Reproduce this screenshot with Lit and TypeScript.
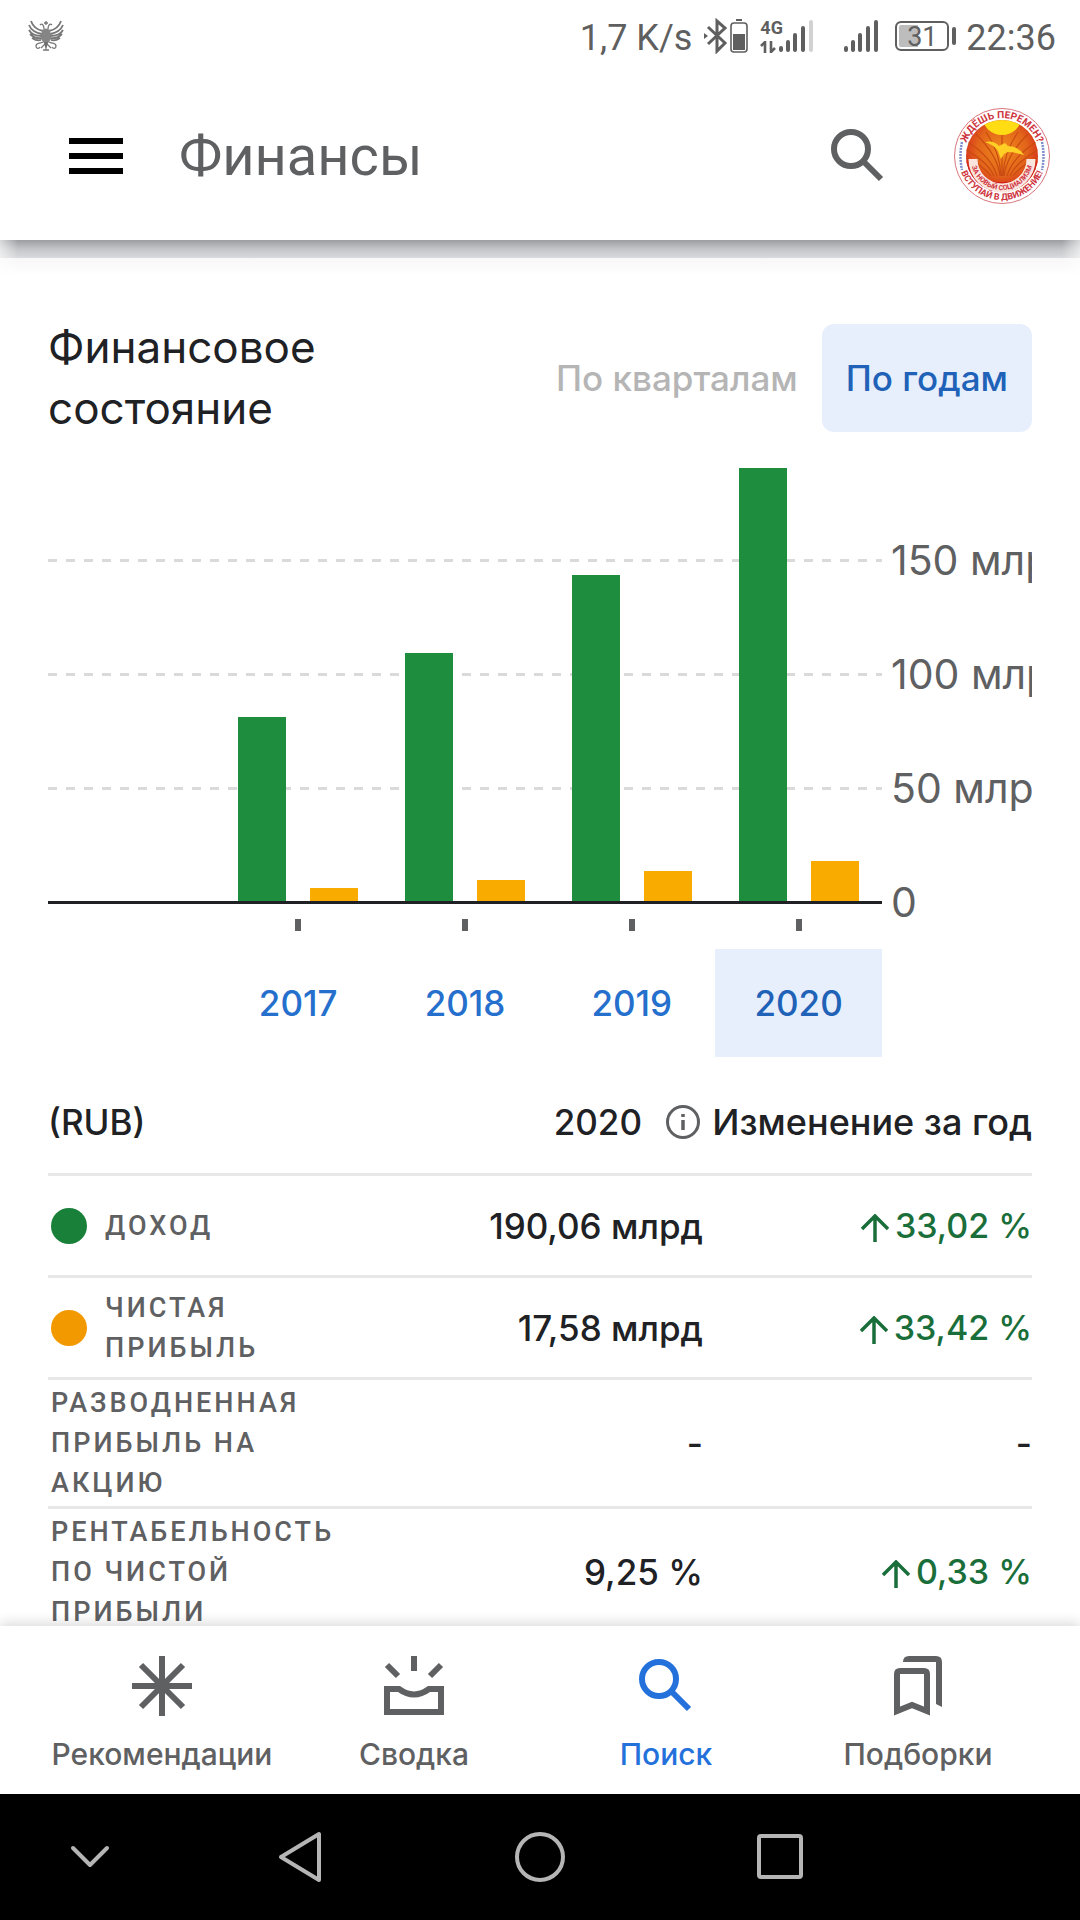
import { LitElement, html, css, svg, nothing } from "lit";
import { customElement, property, state } from "lit/decorators.js";
import { classMap } from "lit/directives/class-map.js";

interface YearData {
    year: string;
    income: number;
    profit: number;
}

interface Row {
    label: string;
    dot?: string;
    value: string;
    change: string;
}

const AXIS_MAX = 200;

const YEARS: YearData[] = [
    { year: "2017", income: 80.6, profit: 5.6 },
    { year: "2018", income: 108.8, profit: 9.2 },
    { year: "2019", income: 142.9, profit: 13.2 },
    { year: "2020", income: 190.06, profit: 17.58 },
];

const ROWS: Row[] = [
    { label: "Доход", dot: "income", value: "190,06 млрд", change: "33,02 %" },
    { label: "Чистая прибыль", dot: "profit", value: "17,58 млрд", change: "33,42 %" },
    { label: "Разводненная прибыль на акцию", value: "-", change: "-" },
    { label: "Рентабельность по чистой прибыли", value: "9,25 %", change: "0,33 %" },
];

const searchIcon = svg`
    <circle cx="20" cy="20" r="17" fill="none" stroke="currentColor" stroke-width="6" />
    <path d="M31 31L50 50" stroke="currentColor" stroke-width="6" />
`;

@customElement("status-bar")
export class StatusBar extends LitElement {
    render() {
        return html`
            <svg class="eagle" width="36" height="32" viewBox="0 0 36 32" aria-hidden="true">
                <g fill="none" stroke="#777" stroke-width="1.8">
                    <path d="M15 11C10 10 5 7 3 1M14 14C8 13 3 10 1 5M14 16C8 16 3 14 1 10M14 18C9 19 5 17 2 14M13 20C10 21 7 20 4 18" />
                    <path d="M21 11C26 10 31 7 33 1M22 14C28 13 33 10 35 5M22 16C28 16 33 14 35 10M22 18C27 19 31 17 34 14M23 20C26 21 29 20 32 18" />
                </g>
                <g fill="none" stroke="#777" stroke-width="1.3">
                    <path d="M16 9C16 5 14 3 12 5M20 9C20 5 22 3 24 5M18 1V5M16 3H20" />
                    <path d="M15 22C12 24 8 22 8 26C8 29 11 29 12 27M21 22C24 24 28 22 28 26C28 29 25 29 24 27" />
                    <path d="M17 24L13 28M19 24L23 28M15 30H21" />
                </g>
                <path d="M14 10Q18 7 22 10L23 19L18 26L13 19Z" fill="#858585" />
                <path d="M16 22L18 31L20 22Z" fill="#6f6f6f" />
            </svg>
            <span class="speed">1,7 K/s</span>
            <svg class="bluetooth" width="24" height="36" viewBox="0 0 24 36" aria-hidden="true">
                <path d="M4 9L21 25L13 33V3L21 10L4 26" fill="none" stroke="currentColor" stroke-width="3" />
                <path d="M0 15L4 18L0 21Z" fill="currentColor" />
            </svg>
            <svg class="device" width="18" height="36" viewBox="0 0 18 36" aria-hidden="true">
                <path d="M6 2H12" stroke="currentColor" stroke-width="2" />
                <rect x="1" y="5" width="16" height="29" rx="3" fill="none" stroke="currentColor" stroke-width="1.6" />
                <rect x="3" y="16" width="12" height="16" fill="currentColor" />
            </svg>
            <div class="network">
                <span>4G</span>
                <svg width="16" height="12" viewBox="0 0 16 12" aria-hidden="true">
                    <path d="M5 12V1L1 5M11 0V11L15 7" fill="none" stroke="currentColor" stroke-width="2.6" />
                </svg>
            </div>
            <svg class="signal" width="36" height="36" viewBox="0 0 36 36" aria-hidden="true">
                <g stroke="currentColor" stroke-width="4" stroke-linecap="round">
                    <path d="M3 32V30M10 32V24M17 32V17M25 32V10" />
                    <path d="M33 32V4" opacity="0.28" />
                </g>
            </svg>
            <svg class="signal second" width="36" height="36" viewBox="0 0 36 36" aria-hidden="true">
                <path
                    d="M3 32V30M10 32V24M17 32V17M25 32V10M33 32V4"
                    stroke="currentColor"
                    stroke-width="4"
                    stroke-linecap="round"
                />
            </svg>
            <div class="battery"><span>31</span></div>
            <div class="nub"></div>
            <span class="time">22:36</span>
        `;
    }

    static styles = css`
        :host {
            display: flex;
            flex: none;
            align-items: center;
            height: 72px;
            padding: 0 24px 0 28px;
            background: #fff;
            color: #5f5f5f;
            font-family: Roboto, sans-serif;
            font-size: 36px;
            line-height: 40px;
        }

        .speed {
            margin: 3px 12px 0 auto;
        }

        .device {
            margin: 0 12px 0 2px;
        }

        .network {
            display: flex;
            flex-direction: column;
            gap: 4px;
            font-size: 18px;
            font-weight: 700;
            line-height: 18px;
            width: 18px;
        }

        .second {
            margin: 0 16px 0 29px;
        }

        .battery {
            box-sizing: border-box;
            width: 54px;
            height: 30px;
            border: 2px solid #5f5f5f;
            border-radius: 6px;
            background: linear-gradient(90deg, #bdbdbd 42%, #fff 42%);
            box-shadow: inset 0 0 0 2px #fff;
            font-size: 27px;
            line-height: 28px;
            text-align: center;
        }

        .nub {
            width: 4px;
            height: 18px;
            margin: 0 10px 0 3px;
            border-radius: 2px;
            background: #5f5f5f;
        }

        .time {
            margin-top: 3px;
        }
    `;
}

@customElement("profile-badge")
export class ProfileBadge extends LitElement {
    render() {
        return html`
            <svg width="96" height="96" viewBox="0 0 96 96" aria-hidden="true">
                <defs>
                    <radialGradient id="field" cx="50%" cy="42%" r="58%">
                        <stop offset="0" stop-color="#f08a1c" />
                        <stop offset="0.6" stop-color="#e2641a" />
                        <stop offset="1" stop-color="#d3261c" />
                    </radialGradient>
                    <clipPath id="disc"><circle cx="48" cy="48" r="36" /></clipPath>
                    <path id="top" d="M10 48A38 38 0 0 1 86 48" />
                    <path id="bottom" d="M4 48A44 44 0 0 0 92 48" />
                    <path id="ribbon" d="M17 51A31 31 0 0 0 79 51" />
                </defs>
                <circle cx="48" cy="48" r="47.500" fill="#fff" stroke="#d9747c" stroke-width="1" />
                <circle cx="48" cy="48" r="36" fill="url(#field)" />
                <g clip-path="url(#disc)">
                    <g fill="none" stroke="#c94b12" stroke-width="1.200">
                        <path d="M46 68Q44 48 22 26M43 68Q38 50 14 34M40 68Q34 54 12 42M37 68Q30 58 12 50" />
                        <path d="M50 68Q52 48 74 26M53 68Q58 50 82 34M56 68Q62 54 84 42M59 68Q66 58 84 50" />
                        <path d="M47 68Q46 44 32 24M49 68Q50 44 64 24M48 68V26" />
                    </g>
                    <circle cx="48" cy="7" r="20" fill="#ffdc14" />
                    <path d="M12 50Q18 74 48 74Q78 74 84 50V90H12Z" fill="#d2241c" />
                </g>
                <path
                    d="M31 34Q40 32 45 38L51 35L54 38Q64 38 70 47Q60 44 54 44L50 46L47 51L44 43Q40 37 31 34Z"
                    fill="#ffcf26"
                />
                <path d="M19 51A29 29 0 0 0 77 51" fill="none" stroke="#fbe6df" stroke-width="9" />
                <g font-family="Roboto, sans-serif" font-weight="700" fill="#cf3540" text-anchor="middle">
                    <text font-size="10"><textPath href="#top" startOffset="50%">ЖДЁШЬ ПЕРЕМЕН?</textPath></text>
                    <text font-size="9"><textPath href="#bottom" startOffset="50%">ВСТУПАЙ В ДВИЖЕНИЕ!</textPath></text>
                    <text font-size="7"><textPath href="#ribbon" startOffset="50%">ЗА НОВЫЙ СОЦИАЛИЗМ</textPath></text>
                </g>
                <g fill="none" stroke="#7f8fce" stroke-width="2.500" stroke-dasharray="2 1">
                    <path d="M8 34Q5 48 8 62M88 34Q91 48 88 62" />
                </g>
            </svg>
        `;
    }

    static styles = css`
        :host {
            display: block;
            height: 96px;
        }
    `;
}

@customElement("finance-chart")
export class FinanceChart extends LitElement {
    @property({ type: String }) selected = "2020";

    private pick(year: string) {
        this.dispatchEvent(new CustomEvent("pick", { detail: year }));
    }

    private bar(kind: string, value: number) {
        return html`<div class="bar ${kind}" style="height: ${(value / AXIS_MAX) * 100}%"></div>`;
    }

    render() {
        return html`
            <div class="plot">
                <div class="lines"><i></i><i class="line"></i><i class="line"></i><i class="line"></i></div>
                <div class="groups">
                    <div></div>
                    ${YEARS.map(
                        (y) => html`<div class="group">${this.bar("income", y.income)}${this.bar("profit", y.profit)}</div>`
                    )}
                </div>
            </div>
            <div class="axis">
                <span>150 млрд</span>
                <span>100 млрд</span>
                <span>50 млрд</span>
                <span>0</span>
            </div>
            <div class="years">
                <div></div>
                ${YEARS.map(
                    (y) => html`<div class="year">
                        <i class="tick"></i>
                        <button
                            class=${classMap({ active: y.year === this.selected })}
                            @click=${() => this.pick(y.year)}
                        >
                            ${y.year}
                        </button>
                    </div>`
                )}
            </div>
        `;
    }

    static styles = css`
        :host {
            display: grid;
            grid-template-columns: 1fr 150px;
            margin-top: 6px;
        }

        .plot {
            display: grid;
            height: 456px;
            border-bottom: 3px solid #202124;
        }

        .lines,
        .groups {
            grid-area: 1 / 1;
        }

        .lines {
            display: grid;
            grid-template-rows: repeat(4, 1fr);
        }

        .line {
            height: 3px;
            background: repeating-linear-gradient(90deg, #dadada 0 9px, transparent 9px 18px);
        }

        .groups,
        .years {
            display: grid;
            grid-template-columns: repeat(5, 1fr);
        }

        .group {
            display: flex;
            align-items: flex-end;
            justify-content: center;
            gap: 24px;
        }

        .bar {
            width: 48px;
        }

        .income {
            background: #1e8e3e;
        }

        .profit {
            background: #f9ab00;
        }

        .axis {
            grid-area: 1 / 2 / 3 / 3;
            padding: 58px 0 0 9px;
            overflow: hidden;
            color: #5f6062;
            font-size: 41px;
            line-height: 114px;
            white-space: nowrap;
        }

        .axis span {
            display: block;
        }

        .year {
            display: flex;
            flex-direction: column;
            align-items: center;
            gap: 18px;
            padding-top: 15px;
        }

        .tick {
            width: 6px;
            height: 12px;
            background: #5f6062;
        }

        button {
            width: 100%;
            height: 108px;
            padding: 0;
            border: 0;
            background: none;
            color: #256fcd;
            font: inherit;
            font-size: 35px;
            font-weight: 500;
        }

        button.active {
            background: #e8effc;
            color: #2062b8;
        }
    `;
}

@customElement("finance-table")
export class FinanceTable extends LitElement {
    @property({ type: String }) year = "2020";

    private change(value: string) {
        if (value === "-") return html`<td>-</td>`;
        return html`<td class="up"><svg width="28" height="28" viewBox="0 0 28 28" aria-hidden="true">
                <path d="M14 28V3M1 15L14 2L27 15" fill="none" stroke="currentColor" stroke-width="3.500" /></svg
            >${value}</td>`;
    }

    render() {
        return html`
            <table>
                <thead>
                    <tr>
                        <th class="name" scope="col">(RUB)</th>
                        <th scope="col">
                            <div class="info">
                                ${this.year}
                                <svg width="34" height="34" viewBox="0 0 34 34" aria-hidden="true">
                                    <circle cx="17" cy="17" r="15.500" fill="none" stroke="#5f6062" stroke-width="3" />
                                    <path d="M17 9V12M17 15V25" stroke="#5f6062" stroke-width="3.500" />
                                </svg>
                            </div>
                        </th>
                        <th class="change" scope="col">Изменение за год</th>
                    </tr>
                </thead>
                <tbody>
                    ${ROWS.map(
                        (row) => html`<tr>
                            <th class="name" scope="row">
                                <div class="label">
                                    ${row.dot ? html`<i class="dot ${row.dot}"></i>` : nothing}
                                    <span>${row.label}</span>
                                </div>
                            </th>
                            <td>${row.value}</td>
                            ${this.change(row.change)}
                        </tr>`
                    )}
                </tbody>
            </table>
        `;
    }

    static styles = css`
        :host {
            display: block;
            margin-top: 14px;
        }

        table {
            width: 100%;
            border-collapse: separate;
            border-spacing: 0;
            table-layout: fixed;
            color: #202124;
            font-size: 35px;
            line-height: 40px;
        }

        tr {
            height: 102px;
        }

        th,
        td {
            padding: 0;
            font-weight: 500;
            text-align: right;
            white-space: nowrap;
        }

        .name {
            width: 31%;
            text-align: left;
        }

        .change {
            width: 329px;
            font-size: 36px;
        }

        .info {
            display: flex;
            align-items: center;
            justify-content: flex-end;
            gap: 24px;
            padding-right: 3px;
        }

        tbody th,
        tbody td {
            padding: 3px 0;
            border-top: 3px solid #e8e8e8;
        }

        .label {
            display: flex;
            align-items: center;
            gap: 18px;
            padding-left: 3px;
            color: #5f6062;
            font-family: Roboto, sans-serif;
            font-size: 27px;
            letter-spacing: 3px;
            text-transform: uppercase;
            white-space: normal;
        }

        .dot {
            flex: none;
            width: 36px;
            height: 36px;
            border-radius: 50%;
        }

        .income {
            background: #188038;
        }

        .profit {
            background: #f29900;
        }

        .up {
            color: #1a6e3a;
            font-size: 34px;
        }

        .up svg {
            margin-right: 6px;
            vertical-align: -4px;
        }
    `;
}

@customElement("bottom-nav")
export class BottomNav extends LitElement {
    @state() private current = "Поиск";

    private items = [
        {
            name: "Рекомендации",
            icon: svg`<path d="M30 0V60M0 30H60M9 9L51 51M51 9L9 51" fill="none" stroke="currentColor" stroke-width="6" />`,
        },
        {
            name: "Сводка",
            icon: svg`
                <path d="M30 0V15M3 9L14 20M57 9L46 20" stroke="currentColor" stroke-width="6" />
                <path d="M3 33H15Q30 44 45 33H57V56H3Z" fill="none" stroke="currentColor" stroke-width="6" />
            `,
        },
        {
            name: "Поиск",
            icon: svg`<g transform="translate(3 3)">${searchIcon}</g>`,
        },
        {
            name: "Подборки",
            icon: svg`
                <path d="M9 55V18Q9 15 12 15H36Q39 15 39 18V55L24 49Z" fill="none" stroke="currentColor" stroke-width="6" />
                <path d="M15 6Q15 0 21 0H48Q54 0 54 6V51L48 48V6Z" fill="currentColor" />
            `,
        },
    ];

    render() {
        return this.items.map(
            ({ name, icon }) => html`<button
                class=${classMap({ active: name === this.current })}
                @click=${() => (this.current = name)}
            >
                <svg width="60" height="60" viewBox="0 0 60 60" aria-hidden="true">${icon}</svg>
                ${name}
            </button>`
        );
    }

    static styles = css`
        :host {
            display: grid;
            flex: none;
            grid-template-columns: repeat(4, 1fr);
            height: 168px;
            padding: 0 36px;
            background: #fff;
            box-shadow: 0 -3px 12px rgba(0, 0, 0, 0.15);
            z-index: 1;
        }

        button {
            display: flex;
            flex-direction: column;
            align-items: center;
            gap: 18px;
            padding: 30px 0 0;
            border: 0;
            background: none;
            color: #5f6062;
            font: inherit;
            font-size: 30px;
            font-weight: 500;
            line-height: 40px;
        }

        button.active {
            color: #2471dc;
        }
    `;
}

@customElement("system-nav")
export class SystemNav extends LitElement {
    render() {
        return html`
            <button aria-label="Скрыть">
                <svg width="54" height="54" viewBox="0 0 54 54"><path d="M10 18L27 35L44 18" /></svg>
            </button>
            <button aria-label="Назад">
                <svg width="54" height="54" viewBox="0 0 54 54"><path d="M46 4V50L8 27Z" /></svg>
            </button>
            <button aria-label="Домой">
                <svg width="54" height="54" viewBox="0 0 54 54"><circle cx="27" cy="27" r="23" /></svg>
            </button>
            <button aria-label="Недавние">
                <svg width="54" height="54" viewBox="0 0 54 54"><rect x="6" y="6" width="42" height="41" rx="2" /></svg>
            </button>
        `;
    }

    static styles = css`
        :host {
            display: grid;
            flex: none;
            grid-template-columns: 3fr 4fr 4fr 4fr 3fr;
            height: 126px;
            background: #000;
        }

        button {
            display: flex;
            align-items: center;
            justify-content: center;
            padding: 0;
            border: 0;
            background: none;
        }

        svg {
            fill: none;
            stroke: #b5b5b5;
            stroke-width: 4;
            stroke-linecap: round;
            stroke-linejoin: round;
        }
    `;
}

@customElement("app-root")
export class AppRoot extends LitElement {
    @state() private year = "2020";
    @state() private period = "По годам";

    render() {
        return html`
            <status-bar></status-bar>
            <header>
                <button class="menu" aria-label="Меню">
                    <svg width="54" height="36" viewBox="0 0 54 36"><path d="M0 3H54M0 18H54M0 33H54" stroke="#000" stroke-width="6" /></svg>
                </button>
                <h1>Финансы</h1>
                <button class="search" aria-label="Поиск">
                    <svg width="54" height="54" viewBox="0 0 54 54">${searchIcon}</svg>
                </button>
                <profile-badge></profile-badge>
            </header>
            <main>
                <div class="top">
                    <h2>Финансовое состояние</h2>
                    ${["По кварталам", "По годам"].map(
                        (name) => html`<button
                            class=${classMap({ period: true, active: name === this.period })}
                            @click=${() => (this.period = name)}
                        >
                            ${name}
                        </button>`
                    )}
                </div>
                <finance-chart
                    .selected=${this.year}
                    @pick=${(e: CustomEvent) => (this.year = e.detail)}
                ></finance-chart>
                <finance-table .year=${this.year}></finance-table>
            </main>
            <bottom-nav></bottom-nav>
            <system-nav></system-nav>
        `;
    }

    static styles = css`
        :host {
            display: flex;
            flex-direction: column;
            height: 100vh;
            background: #fff;
            font-family: Inter, "Open Sans", sans-serif;
        }

        header {
            position: relative;
            z-index: 1;
            display: flex;
            flex: none;
            align-items: center;
            height: 168px;
            padding: 0 30px 0 69px;
            box-sizing: border-box;
            background: #fff;
        }

        header::after {
            content: "";
            position: absolute;
            top: 100%;
            left: 0;
            right: 0;
            height: 36px;
            background: linear-gradient(#9b9da1 0, #c3c5c8 9px, #d9dadd 18px, #f7f7f7 18px, #fff 36px);
            mask-image: linear-gradient(90deg, rgba(0, 0, 0, 0.4), #000 18px calc(100% - 18px), rgba(0, 0, 0, 0.4));
        }

        button {
            padding: 0;
            border: 0;
            background: none;
            font: inherit;
        }

        header button {
            display: flex;
        }

        h1 {
            margin: 0 auto 0 56px;
            color: #5f6062;
            font-family: Roboto, sans-serif;
            font-size: 56px;
            font-weight: 400;
            line-height: 64px;
        }

        .search {
            margin-right: 69px;
            color: #5f6062;
        }

        main {
            flex: 1;
            min-height: 0;
            padding: 77px 48px 0;
            overflow-y: auto;
            scrollbar-width: none;
        }

        .top {
            display: flex;
            align-items: center;
        }

        h2 {
            max-width: 400px;
            margin: 0 auto 0 0;
            color: #202124;
            font-size: 44px;
            font-weight: 400;
            line-height: 61px;
        }

        .period {
            height: 108px;
            padding: 0 24px;
            border-radius: 12px;
            color: #b5b5b6;
            font-size: 35px;
            font-weight: 500;
            white-space: nowrap;
        }

        .period.active {
            background: #e8effc;
            color: #2062b8;
        }
    `;
}
